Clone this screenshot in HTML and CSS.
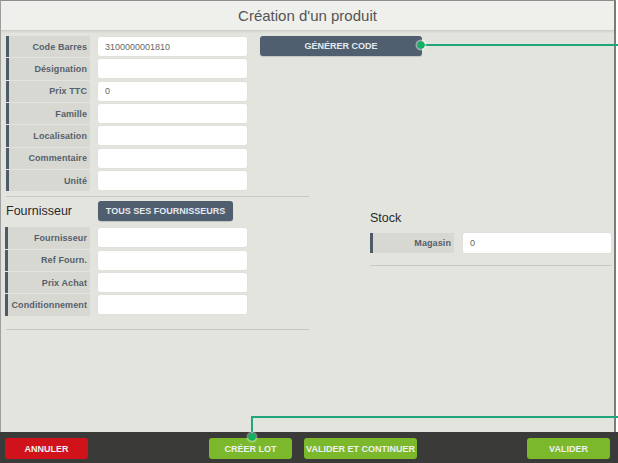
FILE: index.html
```html
<!DOCTYPE html>
<html lang="fr">
<head>
<meta charset="utf-8">
<title>Création d'un produit</title>
<link rel="stylesheet" href="styles.css">
</head>
<body>
<div class="page">
  <div class="frame">
    <header class="header">Création d'un produit</header>
    <main class="main">
      <section class="left">
        <div class="top">
          <div class="fields">
            <div class="row"><div class="label">Code Barres</div><div class="input">3100000001810</div></div>
            <div class="row"><div class="label">Désignation</div><div class="input"></div></div>
            <div class="row"><div class="label">Prix TTC</div><div class="input">0</div></div>
            <div class="row"><div class="label">Famille</div><div class="input"></div></div>
            <div class="row"><div class="label">Localisation</div><div class="input"></div></div>
            <div class="row"><div class="label">Commentaire</div><div class="input"></div></div>
            <div class="row"><div class="label">Unité</div><div class="input"></div></div>
          </div>
          <button class="btn btn-slate btn-gen">GÉNÉRER CODE</button>
        </div>
        <hr class="sep sep-1">
        <div class="section-head">
          <h2 class="title">Fournisseur</h2>
          <button class="btn btn-slate btn-four">TOUS SES FOURNISSEURS</button>
        </div>
        <div class="fields fields-four">
          <div class="row"><div class="label">Fournisseur</div><div class="input"></div></div>
          <div class="row"><div class="label">Ref Fourn.</div><div class="input"></div></div>
          <div class="row"><div class="label">Prix Achat</div><div class="input"></div></div>
          <div class="row"><div class="label">Conditionnement</div><div class="input"></div></div>
        </div>
        <hr class="sep sep-2">
      </section>
      <section class="right">
        <h2 class="title">Stock</h2>
        <div class="fields fields-stock">
          <div class="row"><div class="label">Magasin</div><div class="input">0</div></div>
        </div>
        <hr class="sep sep-3">
      </section>
    </main>
  </div>
  <footer class="footer">
    <button class="btn btn-red">ANNULER</button>
    <button class="btn btn-green btn-lot">CRÉER LOT</button>
    <button class="btn btn-green btn-cont">VALIDER ET CONTINUER</button>
    <button class="btn btn-green btn-valider">VALIDER</button>
  </footer>
  <svg class="annot" width="618" height="463" viewBox="0 0 618 463">
    <line x1="421" y1="45" x2="618" y2="45" stroke="#1fa77b" stroke-width="2"/>
    <circle cx="421" cy="45" r="5.5" fill="#ffffff" opacity="0.45"/>
    <circle cx="421" cy="45" r="3.8" fill="#16b062"/>
    <polyline points="252,437 252,417 618,417" fill="none" stroke="#1fa77b" stroke-width="2"/>
    <circle cx="252" cy="437" r="5.5" fill="#ffffff" opacity="0.35"/>
    <circle cx="252" cy="437" r="3.8" fill="#16b062"/>
  </svg>
</div>
</body>
</html>
```

FILE: styles.css
```css
* { box-sizing: border-box; }
html, body {
  margin: 0;
  padding: 0;
  background: #ffffff;
}
body {
  font-family: "Liberation Sans", Arial, sans-serif;
  width: 618px;
  height: 463px;
  overflow: hidden;
}
.page {
  position: relative;
  width: 618px;
  height: 463px;
  display: flex;
  flex-direction: column;
}
.frame {
  width: 616px;
  height: 432px;
  border-top: 1px solid #8e8e8e;
  border-left: 1px solid #a0a0a0;
  border-right: 2px solid #7c7c7c;
  background: #e4e4df;
  display: flex;
  flex-direction: column;
}
.header {
  height: 30px;
  flex: none;
  background: #efefeb;
  border-bottom: 1px solid #cfcfc9;
  box-shadow: 0 1px 2px rgba(0,0,0,0.08);
  display: flex;
  align-items: center;
  justify-content: center;
  font-size: 15px;
  color: #555555;
}
.main {
  flex: 1;
  display: flex;
  padding: 4px 0 0 4px;
}
.left {
  width: 302px;
  flex: none;
}
.right {
  width: 242px;
  flex: none;
  margin-left: 63px;
  padding-top: 176px;
}
.top {
  display: flex;
  align-items: flex-start;
}
.fields {
  display: flex;
  flex-direction: column;
  gap: 1px;
  padding-left: 1px;
}
.row {
  display: flex;
  align-items: center;
  height: 21.33px;
}
.label {
  width: 84px;
  height: 100%;
  background: #d8d8d2;
  border-left: 3px solid #4d5b69;
  display: flex;
  align-items: center;
  justify-content: flex-end;
  padding-right: 3px;
  font-size: 9px;
  font-weight: bold;
  color: #56606b;
  white-space: nowrap;
  letter-spacing: 0.1px;
}
.input {
  width: 149px;
  height: 19px;
  margin-left: 8px;
  background: #ffffff;
  border-radius: 2px;
  box-shadow: 0 0 1px rgba(0,0,0,0.12);
  font-size: 9px;
  color: #666666;
  display: flex;
  align-items: center;
  padding-left: 7px;
}
.top .row:first-child {
  margin-top: 1px;
}
.btn {
  border: none;
  margin: 0;
  font-family: "Liberation Sans", Arial, sans-serif;
  font-size: 9px;
  font-weight: bold;
  height: 21px;
  border-radius: 3px;
  color: #eef0f0;
  display: flex;
  align-items: center;
  justify-content: center;
  padding: 0;
  flex: none;
}
.btn-slate {
  background: #4f5f70;
  color: #e6eaee;
  box-shadow: 0 1px 1px rgba(0,0,0,0.15);
}
.btn-gen {
  width: 162px;
  margin-left: 13px;
  margin-top: 1px;
  height: 20px;
}
.sep {
  border: none;
  height: 1px;
  background: #c9c9c3;
  margin: 0;
}
.sep-1 {
  margin-top: 5px;
  width: 303px;
  margin-left: 1px;
}
.section-head {
  display: flex;
  align-items: center;
  margin-top: 4px;
}
.title {
  margin: 0;
  font-weight: normal;
  font-size: 12.5px;
  color: #2a2a2a;
}
.section-head .title {
  width: 93px;
  padding-left: 1px;
}
.btn-four {
  width: 135px;
  height: 20px;
}
.fields-four {
  margin-top: 6px;
  padding-left: 0;
}
.fields-four .label {
  width: 85px;
}
.sep-2 {
  margin-top: 13px;
  width: 303px;
  margin-left: 1px;
}
.fields-stock {
  margin-top: 7px;
  padding-left: 0;
}
.fields-stock .label {
  width: 84px;
  height: 20px;
}
.fields-stock .input {
  width: 148px;
  margin-left: 9px;
  height: 20px;
}
.sep-3 {
  margin-top: 12px;
  width: 242px;
}
.footer {
  flex: 1;
  width: 618px;
  background: #3a3a39;
  display: flex;
  align-items: flex-start;
  padding: 6px 8px 0 5px;
}
.btn-red {
  width: 83px;
  background: #d0121b;
}
.btn-green {
  background: #7bb82b;
}
.btn-lot {
  width: 83px;
  margin-left: 121px;
}
.btn-cont {
  width: 113px;
  margin-left: 12px;
}
.btn-valider {
  width: 83px;
  margin-left: auto;
}
.annot {
  position: absolute;
  left: 0;
  top: 0;
  pointer-events: none;
}
```
